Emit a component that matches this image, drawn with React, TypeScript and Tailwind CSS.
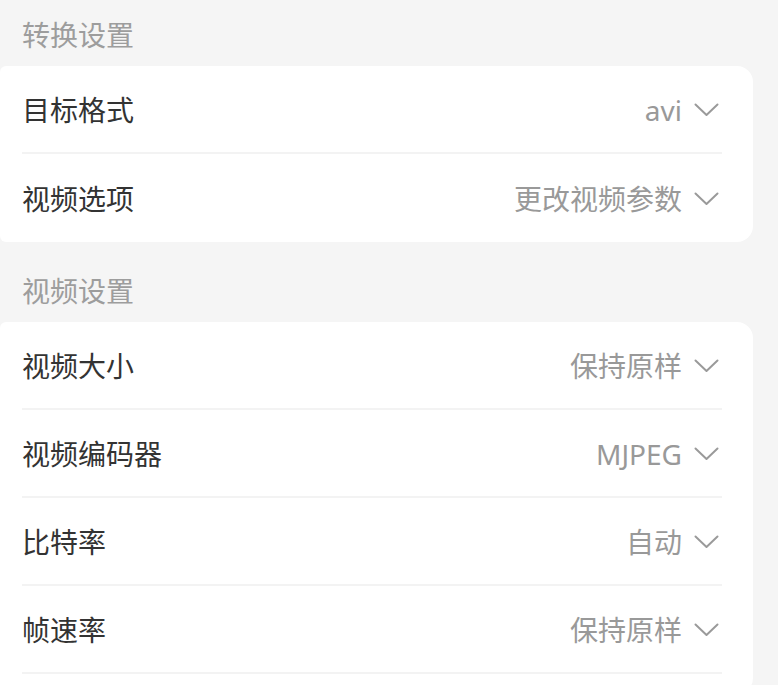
import React from "react";

const Chevron = () => (
  <svg width="26" height="16" viewBox="0 0 26 16" fill="none" className="shrink-0">
    <polyline points="1.5,2.5 12.5,13 23.5,2.5" stroke="#9a9a9a" strokeWidth="2" strokeLinecap="round" strokeLinejoin="round" />
  </svg>
);

type Row = { label: string; value: string };

const Section = ({ title, rows, last }: { title: string; rows: Row[]; last?: boolean }) => (
  <div className="flex flex-col">
    <div className="h-[62px] flex items-center pl-[22px] text-[28px] text-[#9d9d9d]">{title}</div>
    <div className={"bg-white mr-[25px] rounded-r-[16px] rounded-l-[6px] pl-[22px] pr-[31px] flex flex-col"}>
      {rows.map((r, i) => (
        <div
          key={r.label}
          className={
            "h-[88px] flex items-center justify-between pt-[1px] " +
            (i < rows.length - 1 || last ? "border-b-2 border-[#f3f3f3]" : "")
          }
        >
          <span className="text-[28px] text-[#333333]">{r.label}</span>
          <span className="flex items-center gap-[12px] pr-[2px]">
            <span className="text-[28px] text-[#999999]">{r.value}</span>
            <Chevron />
          </span>
        </div>
      ))}
      {last ? <div className="h-[20px]" /> : null}
    </div>
  </div>
);

export default function App() {
  return (
    <div
      className="w-[778px] h-[685px] overflow-hidden bg-[#f5f5f5] pt-[4px] flex flex-col gap-[18px]"
      style={{ fontFamily: '"Noto Sans", "Noto Sans CJK SC", sans-serif' }}
    >
      <Section
        title="转换设置"
        rows={[
          { label: "目标格式", value: "avi" },
          { label: "视频选项", value: "更改视频参数" },
        ]}
      />
      <Section
        title="视频设置"
        last
        rows={[
          { label: "视频大小", value: "保持原样" },
          { label: "视频编码器", value: "MJPEG" },
          { label: "比特率", value: "自动" },
          { label: "帧速率", value: "保持原样" },
        ]}
      />
    </div>
  );
}
